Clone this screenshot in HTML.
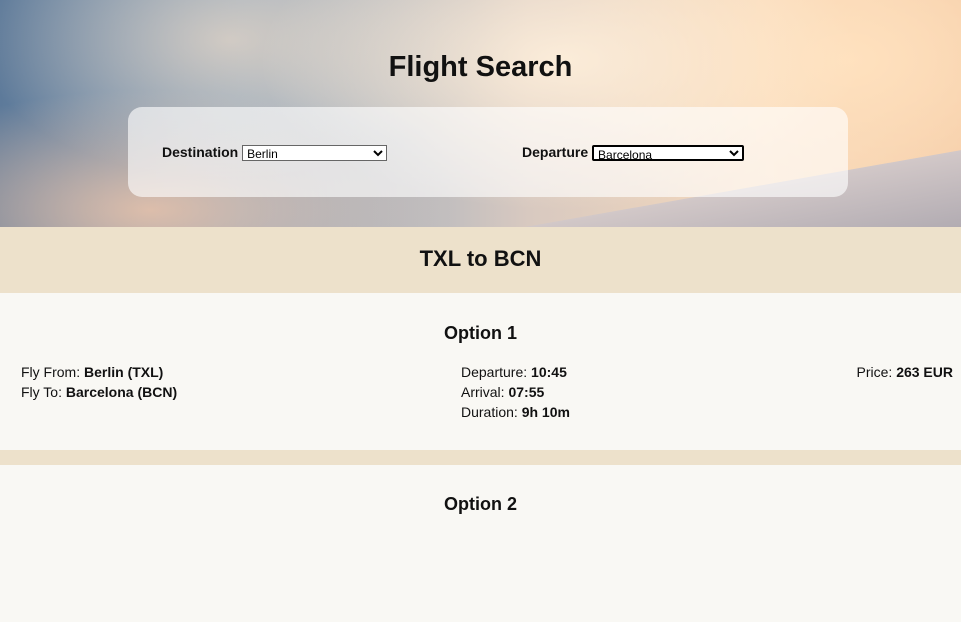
<!DOCTYPE html>
<html><head><style>
body{margin:0;width:961px;height:534px;overflow:hidden;font-family:"Liberation Sans",sans-serif;color:#111;background:#f9f8f4}
.hero{position:relative;height:227px;background:
radial-gradient(ellipse 300px 150px at 560px 60px,rgba(255,240,220,.9),transparent),
radial-gradient(ellipse 250px 140px at 230px 40px,rgba(240,220,200,.7),transparent),
radial-gradient(ellipse 300px 120px at 150px 210px,rgba(245,200,170,.8),transparent),
radial-gradient(ellipse 300px 180px at 850px 60px,rgba(255,225,190,1),transparent),
linear-gradient(90deg,#5d7a9a 0%,#8aa3bb 25%,#d8c9c0 55%,#f6d9bc 80%,#f3c9a4 100%);overflow:hidden}
.wing{position:absolute;left:525px;top:227px;width:520px;height:120px;background:linear-gradient(180deg,#d2c8c8,#a09ca6);transform:skewY(-10deg);transform-origin:left top}
h1{position:absolute;top:51px;left:0;right:0;margin:0;text-align:center;font-size:29px;font-weight:bold}
.panel{position:absolute;left:128px;top:107px;width:720px;height:90px;background:rgba(255,255,255,.62);border-radius:14px}
.f{position:absolute;top:37px;font-size:14px;font-weight:bold}
select{font-size:12px;height:16px;padding:0;border:1px solid #666;background:#fff;vertical-align:middle;font-family:"Liberation Sans",sans-serif}
.band{height:66px;background:#ede1cb;text-align:center;font-size:22px;font-weight:bold;line-height:64px}
.opt{height:157px;background:#f9f8f4;position:relative;font-size:14px}
.opt h2{margin:0;position:absolute;top:30px;width:100%;text-align:center;font-size:18px;font-weight:bold}
.c{position:absolute;top:69px;line-height:20px}
.sep{height:15px;background:#ede1cb}
</style></head><body>
<div class="hero"><div class="wing"></div>
<h1>Flight Search</h1>
<div class="panel">
<div class="f" style="left:34px">Destination <select style="width:145px"><option>Berlin</option></select></div>
<div class="f" style="left:394px">Departure <select style="width:152px;border:2px solid #000;border-radius:2px"><option>Barcelona</option></select></div>
</div></div>
<div class="band">TXL to BCN</div>
<div class="opt"><h2>Option 1</h2>
<div class="c" style="left:21px">Fly From: <b>Berlin (TXL)</b><br>Fly To: <b>Barcelona (BCN)</b></div>
<div class="c" style="left:461px">Departure: <b>10:45</b><br>Arrival: <b>07:55</b><br>Duration: <b>9h 10m</b></div>
<div class="c" style="right:8px">Price: <b>263 EUR</b></div>
</div>
<div class="sep"></div>
<div class="opt"><h2 style="top:29px">Option 2</h2></div>
</body></html>
